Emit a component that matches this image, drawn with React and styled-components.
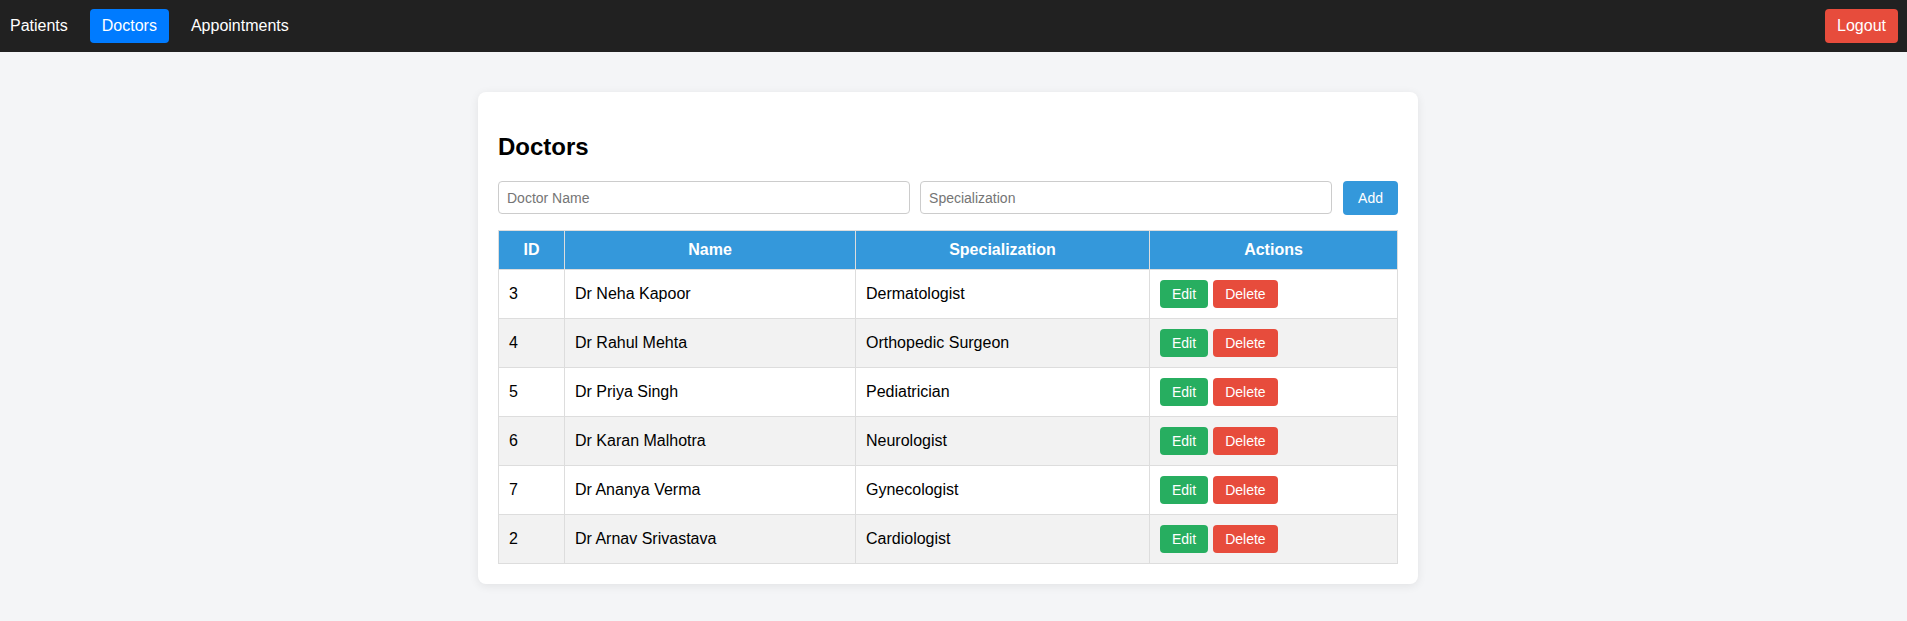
import React from "react";
import styled, { createGlobalStyle } from "styled-components";

const GlobalStyle = createGlobalStyle`
  * { box-sizing: border-box; }
  body {
    margin: 0;
    background: #f4f5f7;
    font-family: "Liberation Sans", Arial, sans-serif;
    color: #000;
  }
`;

const Navbar = styled.nav`
  height: 52px;
  background: #212121;
  display: flex;
  align-items: center;
  justify-content: space-between;
  padding: 0 9px 0 0;
`;

const NavGroup = styled.div`
  display: flex;
  align-items: center;
  gap: 10px;
  margin-left: -2px;
`;

const NavLink = styled.a`
  display: block;
  padding: 8px 12px;
  font-size: 16px;
  line-height: 18px;
  color: #fff;
  text-decoration: none;
  border-radius: 4px;
  background: ${(p) => (p.$active ? "#007bff" : "transparent")};
  cursor: pointer;
`;

const LogoutButton = styled.button`
  height: 34px;
  padding: 0 12px;
  font-family: inherit;
  font-size: 16px;
  color: #fff;
  background: #e74c3c;
  border: none;
  border-radius: 4px;
  cursor: pointer;
`;

const Main = styled.main`
  padding: 40px 11px 40px 0;
`;

const Card = styled.section`
  max-width: 940px;
  margin: 0 auto;
  background: #fff;
  border-radius: 8px;
  padding: 20px;
  box-shadow: 0 2px 10px rgba(0, 0, 0, 0.08);
`;

const Title = styled.h2`
  font-size: 24px;
  font-weight: bold;
  margin: 20px 0 20px;
  line-height: 29px;
`;

const Form = styled.div`
  display: flex;
  gap: 10px;
  margin-bottom: 15px;
`;

const Input = styled.input`
  flex: 1;
  min-width: 0;
  height: 33px;
  padding: 0 8px;
  font-family: inherit;
  font-size: 14px;
  border: 1px solid #ccc;
  border-radius: 4px;
  &::placeholder { color: #757575; }
`;

const AddButton = styled.button`
  height: 34px;
  padding: 0 15px;
  margin-left: 1px;
  font-family: inherit;
  font-size: 14px;
  color: #fff;
  background: #3498db;
  border: none;
  border-radius: 4px;
  cursor: pointer;
`;

const Table = styled.table`
  width: 100%;
  border-collapse: collapse;
  font-size: 16px;
`;

const Th = styled.th`
  background: #3498db;
  color: #fff;
  font-weight: bold;
  text-align: center;
  padding: 10px;
  line-height: 18px;
  border: 1px solid #ddd;
  width: ${(p) => p.$w || "auto"};
`;

const Row = styled.tr`
  background: ${(p) => (p.$alt ? "#f2f2f2" : "#fff")};
`;

const Td = styled.td`
  padding: 10px;
  border: 1px solid #ddd;
  line-height: 18px;
  text-align: left;
  vertical-align: middle;
`;

const Actions = styled.div`
  display: flex;
  gap: 5px;
`;

const SmallButton = styled.button`
  height: 28px;
  padding: 0 12px;
  font-family: inherit;
  font-size: 14px;
  color: #fff;
  background: ${(p) => (p.$variant === "delete" ? "#e74c3c" : "#27ae60")};
  border: none;
  border-radius: 4px;
  cursor: pointer;
`;

const doctors = [
  { id: 3, name: "Dr Neha Kapoor", spec: "Dermatologist" },
  { id: 4, name: "Dr Rahul Mehta", spec: "Orthopedic Surgeon" },
  { id: 5, name: "Dr Priya Singh", spec: "Pediatrician" },
  { id: 6, name: "Dr Karan Malhotra", spec: "Neurologist" },
  { id: 7, name: "Dr Ananya Verma", spec: "Gynecologist" },
  { id: 2, name: "Dr Arnav Srivastava", spec: "Cardiologist" },
];

export default function App() {
  return (
    <>
      <GlobalStyle />
      <Navbar>
        <NavGroup>
          <NavLink>Patients</NavLink>
          <NavLink $active>Doctors</NavLink>
          <NavLink>Appointments</NavLink>
        </NavGroup>
        <LogoutButton>Logout</LogoutButton>
      </Navbar>
      <Main>
        <Card>
          <Title>Doctors</Title>
          <Form>
            <Input placeholder="Doctor Name" />
            <Input placeholder="Specialization" />
            <AddButton>Add</AddButton>
          </Form>
          <Table>
            <thead>
              <tr>
                <Th $w="66px">ID</Th>
                <Th $w="291px">Name</Th>
                <Th $w="294px">Specialization</Th>
                <Th>Actions</Th>
              </tr>
            </thead>
            <tbody>
              {doctors.map((d, i) => (
                <Row key={d.id} $alt={i % 2 === 1}>
                  <Td>{d.id}</Td>
                  <Td>{d.name}</Td>
                  <Td>{d.spec}</Td>
                  <Td>
                    <Actions>
                      <SmallButton>Edit</SmallButton>
                      <SmallButton $variant="delete">Delete</SmallButton>
                    </Actions>
                  </Td>
                </Row>
              ))}
            </tbody>
          </Table>
        </Card>
      </Main>
    </>
  );
}
